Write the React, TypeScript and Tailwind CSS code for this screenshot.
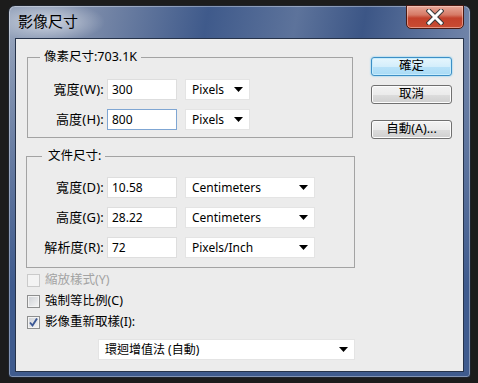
import React from "react";

const font = { fontFamily: '"Noto Sans", "Noto Sans CJK TC", sans-serif' };

function Arrow() {
  return (
    <svg width="9" height="5" viewBox="0 0 9 5" className="shrink-0">
      <path d="M0 0 H9 L4.5 5 Z" fill="#000" />
    </svg>
  );
}

function Field({ value, focused }: { value: string; focused?: boolean }) {
  return (
    <div
      className={`w-[70px] h-[21px] bg-white border pl-[4px] flex items-center text-[12px] text-black ${
        focused ? "border-[#7fa6d3]" : "border-[#dedede]"
      }`}
    >
      {value}
    </div>
  );
}

function Select({ value, width }: { value: string; width: string }) {
  return (
    <div
      className={`${width} h-[21px] bg-white border border-[#e4e4e4] pl-[6px] pr-[6px] flex items-center justify-between text-[12px] text-black`}
    >
      <span>{value}</span>
      <Arrow />
    </div>
  );
}

function Row({ label, value, unit, unitWidth, focused, labelWidth }: {
  label: string;
  value: string;
  unit: string;
  unitWidth: string;
  focused?: boolean;
  labelWidth: string;
}) {
  return (
    <div className="flex items-center h-[21px]">
      <span className={`${labelWidth} text-right text-[13px] tracking-[0.2px] text-black pr-[3px]`}>{label}</span>
      <Field value={value} focused={focused} />
      <div className="ml-[8px]">
        <Select value={unit} width={unitWidth} />
      </div>
    </div>
  );
}

function Check({ label, checked, disabled }: { label: string; checked?: boolean; disabled?: boolean }) {
  return (
    <div className="flex items-center h-[21px]">
      <div
        className={`w-[13px] h-[13px] border flex items-center justify-center ${
          disabled
            ? "border-[#cacaca] bg-[#f3f3f3]"
            : "border-[#8e8f8f] bg-[linear-gradient(135deg,#cdd0d5,#f6f6f6)] shadow-[inset_0_0_0_1px_#f4f4f4]"
        }`}
      >
        {checked && (
          <svg width="11" height="11" viewBox="0 0 11 11">
            <path d="M2 5.5 L4.5 8.5 L9 1.5" fill="none" stroke="#3a5795" strokeWidth="1.9" />
          </svg>
        )}
      </div>
      <span className={`ml-[5px] text-[12.5px] ${disabled ? "text-[#a3a3a3]" : "text-black"}`}>{label}</span>
    </div>
  );
}

function Btn({ children, primary }: { children: React.ReactNode; primary?: boolean }) {
  return (
    <button
      className={`w-[81px] h-[19px] rounded-[3px] border text-[12.5px] leading-none text-black flex items-center justify-center ${
        primary
          ? "border-[#3c8fc6] bg-[linear-gradient(to_bottom,#e6f6fd_0%,#d4eefb_50%,#b9e2f8_51%,#a9dbf6_100%)] shadow-[0_0_2px_#5cc3f2,inset_0_0_0_1px_#c7ecfc]"
          : "border-[#707070] bg-[linear-gradient(to_bottom,#f3f3f3_0%,#ebebeb_50%,#dddddd_51%,#cfcfcf_100%)] shadow-[inset_0_0_0_1px_#fcfcfc]"
      }`}
    >
      {children}
    </button>
  );
}

export default function App() {
  return (
    <div className="w-[478px] h-[383px] bg-[#1c1c1c] pt-[5px] pl-[8px]" style={font}>
      <div className="w-[463px] h-[373px] rounded-t-[7px] rounded-b-[4px] border border-[#1e232c] px-[6px] pb-[5px] flex flex-col shadow-[inset_0_0_0_1px_rgba(255,255,255,0.35)] bg-[radial-gradient(ellipse_56px_20px_at_40px_16px,rgba(255,255,255,0.6),rgba(255,255,255,0)),linear-gradient(to_bottom,rgba(63,91,142,0)_34px,#3f5b8e_280px),linear-gradient(100deg,#95a3bb_0%,#7a8aa9_16%,#3f5a8b_38%,#5d739b_55%,#3c5686_68%,#687da4_85%,#8a9ab6_100%)]">
        {/* Title bar */}
        <div className="h-[32px] flex items-start justify-between">
          <span className="ml-[3px] mt-[5px] text-[15px] leading-[20px] text-black">影像尺寸</span>
          <button className="w-[58px] h-[24px] -mt-px rounded-b-[5px] border border-[#4a1a12] bg-[linear-gradient(to_bottom,#e8a898_0%,#d67a66_40%,#c3412b_55%,#c84c32_100%)] shadow-[inset_0_0_0_1px_rgba(255,220,210,0.5)] flex items-center justify-center">
            <svg width="18" height="16" viewBox="0 0 18 16">
              <path d="M3 2 L15 14 M15 2 L3 14" stroke="#3a3a3a" strokeWidth="5" strokeLinecap="square" />
              <path d="M3 2 L15 14 M15 2 L3 14" stroke="#ffffff" strokeWidth="3" strokeLinecap="square" />
            </svg>
          </button>
        </div>

        {/* Client area */}
        <div className="flex-1 border border-[#26334a] bg-[#ececec] flex">
          <div className="w-[340px] flex flex-col">
            <fieldset className="ml-[11px] mt-[10px] w-[326px] border border-[#a3a3a3] pt-[14px] pb-[7px] flex flex-col gap-[9px]">
              <legend className="ml-[12px] px-[4px] text-[12.5px] leading-[16px] text-black">像素尺寸:703.1K</legend>
              <Row label="寬度(W):" value="300" unit="Pixels" unitWidth="w-[65px]" labelWidth="w-[79px]" />
              <Row label="高度(H):" value="800" unit="Pixels" unitWidth="w-[65px]" labelWidth="w-[79px]" focused />
            </fieldset>

            <fieldset className="ml-[10px] mt-[10px] w-[329px] border border-[#a3a3a3] pt-[13px] pb-[9px] flex flex-col gap-[9px]">
              <legend className="ml-[15px] pl-[6px] pr-[4px] text-[12.5px] leading-[16px] text-black">文件尺寸:</legend>
              <Row label="寬度(D):" value="10.58" unit="Centimeters" unitWidth="w-[130px]" labelWidth="w-[80px]" />
              <Row label="高度(G):" value="28.22" unit="Centimeters" unitWidth="w-[130px]" labelWidth="w-[80px]" />
              <Row label="解析度(R):" value="72" unit="Pixels/Inch" unitWidth="w-[130px]" labelWidth="w-[80px]" />
            </fieldset>

            <div className="ml-[11px] mt-[2px] flex flex-col">
              <Check label="縮放樣式(Y)" disabled />
              <Check label="強制等比例(C)" />
              <Check label="影像重新取樣(I):" checked />
            </div>

            <div className="ml-[82px] mt-[6px]">
              <Select value="環迴增值法 (自動)" width="w-[257px]" />
            </div>
          </div>

          <div className="ml-[15px] pt-[18px] flex flex-col">
            <Btn primary>確定</Btn>
            <div className="mt-[9px]">
              <Btn>取消</Btn>
            </div>
            <div className="mt-[16px]">
              <Btn>自動(A)...</Btn>
            </div>
          </div>
        </div>
      </div>
    </div>
  );
}
